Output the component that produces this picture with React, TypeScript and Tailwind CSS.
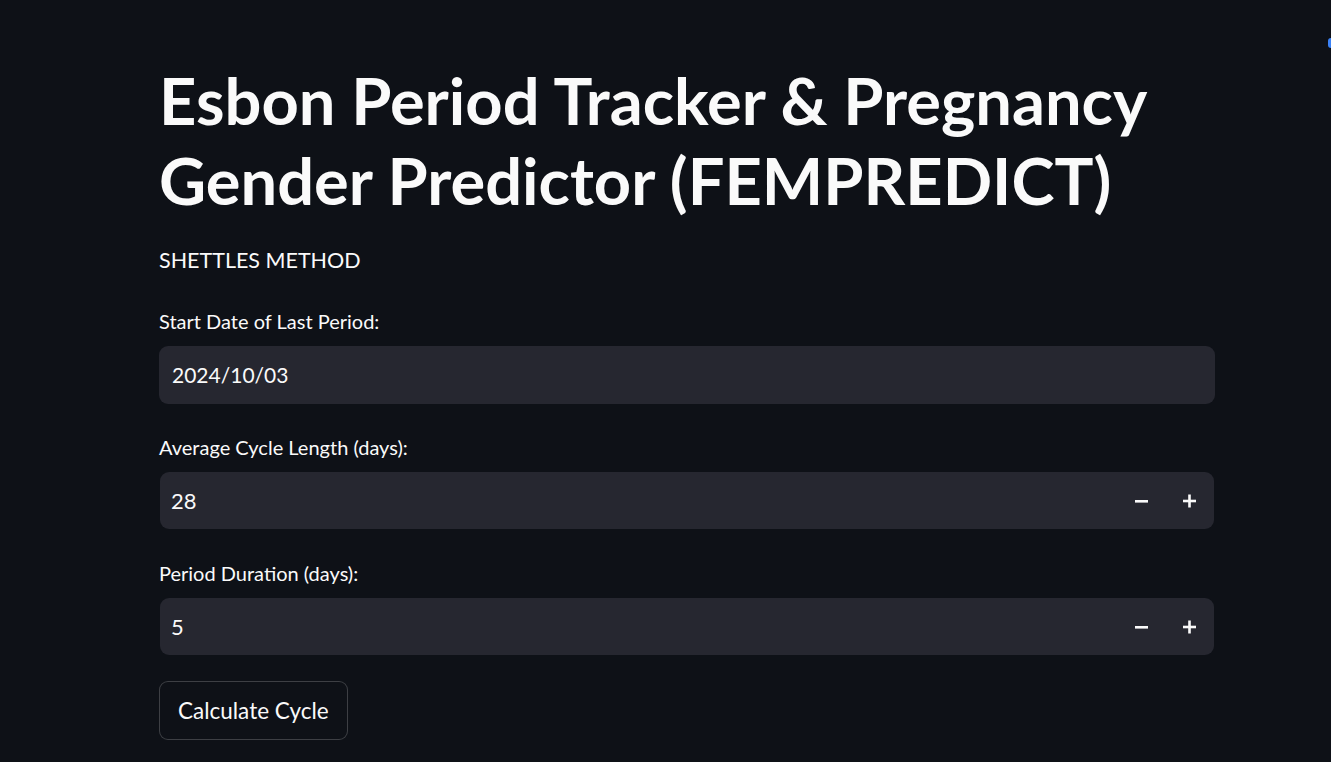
import React from "react";

const font = { fontFamily: "Lato, 'Noto Sans', sans-serif" };

function Label({ children }: { children: React.ReactNode }) {
  return (
    <div className="h-[30px] flex items-center text-[20px] text-[#fafafa] leading-[30px]">
      {children}
    </div>
  );
}

function NumberInput({ value }: { value: string }) {
  return (
    <div className="mt-[10px] h-[57px] w-[1054px] ml-px flex rounded-[9px] bg-[#262730] overflow-hidden">
      <div className="flex-1 flex items-center pl-[11px] text-[22px] text-[#fafafa]">{value}</div>
      <div className="w-[48px] flex items-center justify-center text-[#fafafa]">
        <svg width="14" height="14" viewBox="0 0 14 14"><rect x="0" y="6" width="13" height="2.6" fill="#fafafa" /></svg>
      </div>
      <div className="w-[48px] flex items-center justify-center text-[#fafafa]">
        <svg width="14" height="14" viewBox="0 0 14 14"><rect x="0" y="5.7" width="13" height="2.6" fill="#fafafa" /><rect x="5.2" y="0.5" width="2.6" height="13" fill="#fafafa" /></svg>
      </div>
    </div>
  );
}

export default function App() {
  return (
    <div className="relative w-full h-[762px] overflow-hidden bg-[#0e1117]" style={font}>
      <div className="absolute right-0 top-[38px] w-[3px] h-[10px] bg-[#3b82f6] rounded-l" />
      <div className="pl-[159px] pt-[60px] w-[1215px]">
        <h1 className="text-[65px] font-bold leading-[80px] text-[#fafafa]">
          Esbon Period Tracker &amp; Pregnancy
          <br />
          Gender Predictor (FEMPREDICT)
        </h1>
        <div className="mt-[24px] h-[32px] flex items-center text-[21.5px] text-[#fafafa]">SHETTLES METHOD</div>
        <div className="mt-[30px]">
          <Label>Start Date of Last Period:</Label>
          <div className="mt-[10px] h-[58px] w-[1056px] flex items-center pl-[13px] rounded-[9px] bg-[#262730] text-[21px] text-[#fafafa]">
            2024/10/03
          </div>
        </div>
        <div className="mt-[28px]">
          <Label>Average Cycle Length (days):</Label>
          <NumberInput value="28" />
        </div>
        <div className="mt-[29px]">
          <Label>Period Duration (days):</Label>
          <NumberInput value="5" />
        </div>
        <button
          className="mt-[26px] h-[59px] px-[18px] rounded-[9px] border border-[#fafafa33] bg-[#0e1117] text-[22.5px] text-[#fafafa]"
          style={font}
        >
          Calculate Cycle
        </button>
      </div>
    </div>
  );
}
